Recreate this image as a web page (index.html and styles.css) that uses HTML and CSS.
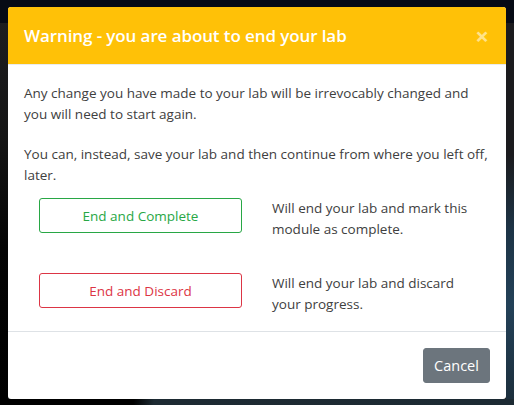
FILE: index.html
```html
<!DOCTYPE html>
<html>
<head>
<meta charset="utf-8">
<link rel="stylesheet" href="styles.css">
</head>
<body>
<div class="page">
  <div class="topbar"></div>
  <div class="main">
    <div class="left-panel"></div>
    <div class="right-panel"></div>
  </div>
  <div class="bottom"></div>
</div>
<div class="modal">
  <div class="modal-header">
    <h5 class="modal-title">Warning - you are about to end your lab</h5>
    <span class="close">&times;</span>
  </div>
  <div class="modal-body">
    <p>Any change you have made to your lab will be irrevocably changed and you will need to start again.</p>
    <p class="last">You can, instead, save your lab and then continue from where you left off, later.</p>
    <div class="option">
      <div class="btn-col"><button class="btn btn-green">End and Complete</button></div>
      <div class="desc">Will end your lab and mark this module as complete.</div>
    </div>
    <div class="option">
      <div class="btn-col"><button class="btn btn-red">End and Discard</button></div>
      <div class="desc">Will end your lab and discard your progress.</div>
    </div>
  </div>
  <div class="modal-footer">
    <button class="btn btn-cancel">Cancel</button>
  </div>
</div>
</body>
</html>
```
FILE: styles.css
```css
html, body {
  margin: 0;
  padding: 0;
  height: 100%;
}
body {
  background: #111;
  font-family: "Open Sans", "Noto Sans", sans-serif;
  overflow: hidden;
}
.page {
  height: 405px;
  display: flex;
  flex-direction: column;
}
.topbar {
  height: 23px;
  background: #060a15;
}
.main {
  flex: 1;
  display: flex;
  justify-content: space-between;
}
.left-panel {
  width: 8px;
  background: linear-gradient(to bottom, #1d1d1f 0%, #151515 30%, #050505 60%, #000 100%);
}
.right-panel {
  width: 8px;
  background: linear-gradient(to bottom, #1b1b1e 0%, #1b1b1e 35%, #1d3446 55%, #234158 75%, #1c2f3d 100%);
}
.bottom {
  height: 6px;
  background: linear-gradient(100deg, #000 0%, #000 26%, #1d2a32 30%, #1c2a33 100%);
}
.modal {
  position: absolute;
  left: 8px;
  top: 7px;
  width: 498px;
  background: #fff;
  border-radius: 3px;
  overflow: hidden;
  color: #404040;
  font-size: 13.5px;
  line-height: 21px;
}
.modal-header {
  background: #ffc107;
  height: 58px;
  box-sizing: border-box;
  padding: 0 16px;
  display: flex;
  align-items: center;
  justify-content: space-between;
  border-bottom: 1px solid #e9ecef;
}
.modal-title {
  margin: 0;
  color: #fff;
  font-size: 17px;
  font-weight: 600;
  letter-spacing: -0.1px;
}
.close {
  color: #ffe38a;
  font-size: 24px;
  font-weight: 700;
  margin-right: 1px;
}
.modal-body {
  padding: 18px 16px 16px;
}
.modal-body p {
  margin: 0 0 19px;
}
.modal-body p.last {
  margin-bottom: 12px;
}
.option {
  display: grid;
  grid-template-columns: 1fr 1fr;
  column-gap: 30px;
  margin-bottom: 33px;
  padding: 0 15px;
}
.option:last-child {
  margin-bottom: 0;
}
.btn {
  font-family: inherit;
  font-size: 13.5px;
  background: #fff;
  border-radius: 3px;
  height: 35px;
  cursor: pointer;
}
.btn-col .btn {
  width: 100%;
}
.btn-green {
  border: 1px solid #28a745;
  color: #28a745;
}
.btn-red {
  border: 1px solid #dc3545;
  color: #dc3545;
}
.modal-footer {
  border-top: 1px solid #dee2e6;
  padding: 16px;
  display: flex;
  justify-content: flex-end;
}
.btn-cancel {
  background: #6c757d;
  border: 1px solid #6c757d;
  color: #fff;
  width: 67px;
  padding: 0;
  font-size: 14.5px;
}
```
